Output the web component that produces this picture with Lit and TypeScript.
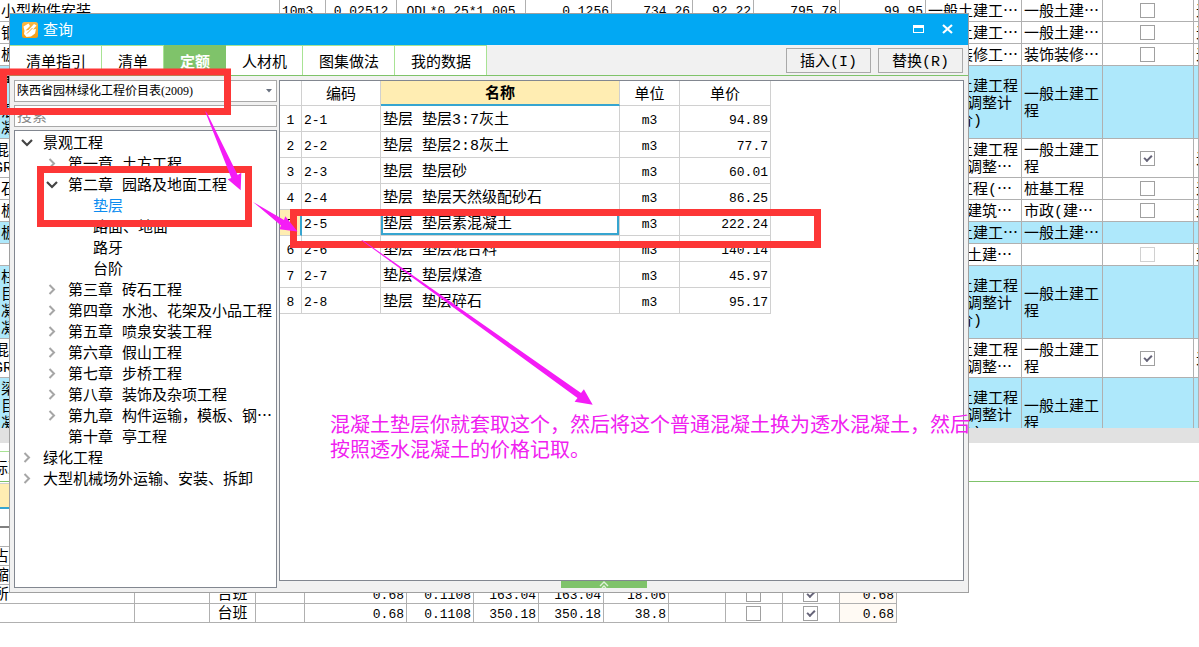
import { LitElement, html, css, svg, nothing } from "lit";
import { customElement, state } from "lit/decorators.js";
import { classMap } from "lit/directives/class-map.js";

type Check = "on" | "off" | "dim" | "";

interface SheetRow {
  size: "short" | "medium" | "tall";
  blue?: boolean;
  name: string;
  cut?: boolean;
  nums?: string[];
  major: string;
  minor: string;
  check: Check;
  last: string;
}

const SHEET: SheetRow[] = [
  { size: "short", name: "小型构件安装", nums: ["10m3", "0.02512", "QDL*0.25*1.005", "0.1256", "734.26", "92.22", "795.78", "99.95"], major: "一般土建工…", minor: "一般土建…", check: "off", last: "无" },
  { size: "short", name: "钢", major: "一般土建工…", minor: "一般土建…", check: "off", last: "无" },
  { size: "short", name: "板", major: "装饰装修工…", minor: "装饰装修…", check: "off", last: "无" },
  { size: "tall", blue: true, name: "量\n\n混\n凝", major: "一般土建工程\n(人工调整计\n人工价)", minor: "一般土建工程", check: "", last: "" },
  { size: "medium", name: "混\nGR", cut: true, major: "一般土建工程\n(人工调整…", minor: "一般土建工程", check: "on", last: "无" },
  { size: "short", name: "石", major: "桩基工程(…", minor: "桩基工程", check: "off", last: "无" },
  { size: "short", name: "板", major: "市政(建筑…", minor: "市政(建…", check: "off", last: "无" },
  { size: "short", blue: true, name: "板", major: "一般土建工…", minor: "一般土建…", check: "", last: "" },
  { size: "short", name: "", major: "一般(土建…", minor: "", check: "dim", last: "无" },
  { size: "tall", blue: true, name: "柱\n目\n凝\n凝", major: "一般土建工程\n(人工调整计\n人工价)", minor: "一般土建工程", check: "", last: "" },
  { size: "medium", name: "混\nGR", cut: true, major: "一般土建工程\n(人工调整…", minor: "一般土建工程", check: "on", last: "无" },
  { size: "tall", blue: true, name: "梁\n目\n凝\n凝", major: "一般土建工程\n(人工调整计\n人工价)", minor: "一般土建工程", check: "", last: "" },
];

interface TreeNode {
  level: 0 | 1 | 2;
  text: string;
  mark?: "open" | "closed";
}

const TREE: TreeNode[] = [
  { level: 0, text: "景观工程", mark: "open" },
  { level: 1, text: "第一章 土方工程", mark: "closed" },
  { level: 1, text: "第二章 园路及地面工程", mark: "open" },
  { level: 2, text: "垫层" },
  { level: 2, text: "路面、地面" },
  { level: 2, text: "路牙" },
  { level: 2, text: "台阶" },
  { level: 1, text: "第三章 砖石工程", mark: "closed" },
  { level: 1, text: "第四章 水池、花架及小品工程", mark: "closed" },
  { level: 1, text: "第五章 喷泉安装工程", mark: "closed" },
  { level: 1, text: "第六章 假山工程", mark: "closed" },
  { level: 1, text: "第七章 步桥工程", mark: "closed" },
  { level: 1, text: "第八章 装饰及杂项工程", mark: "closed" },
  { level: 1, text: "第九章 构件运输，模板、钢…", mark: "closed" },
  { level: 1, text: "第十章 亭工程" },
  { level: 0, text: "绿化工程", mark: "closed" },
  { level: 0, text: "大型机械场外运输、安装、拆卸", mark: "closed" },
];

const QUOTA = [
  ["2-1", "垫层 垫层3:7灰土", "m3", "94.89"],
  ["2-2", "垫层 垫层2:8灰土", "m3", "77.7"],
  ["2-3", "垫层 垫层砂", "m3", "60.01"],
  ["2-4", "垫层 垫层天然级配砂石", "m3", "86.25"],
  ["2-5", "垫层 垫层素混凝土", "m3", "222.24"],
  ["2-6", "垫层 垫层混合料", "m3", "140.14"],
  ["2-7", "垫层 垫层煤渣", "m3", "45.97"],
  ["2-8", "垫层 垫层碎石", "m3", "95.17"],
];

const TABS = ["清单指引", "清单", "定额", "人材机", "图集做法", "我的数据"];

const FONT = css`
  :host {
    font-family: "Liberation Mono", "Noto Sans CJK SC", monospace;
    font-size: 15px;
    line-height: 17px;
    color: #000;
  }
  * {
    box-sizing: border-box;
  }
  table {
    border-collapse: separate;
    border-spacing: 0;
    table-layout: fixed;
  }
  td,
  th {
    padding: 4px 2px 0;
    overflow: hidden;
    white-space: nowrap;
    font-weight: 400;
    text-align: left;
  }
  .dots {
    font-family: "Noto Sans CJK SC", sans-serif;
    line-height: 0;
  }
  .num {
    font-size: 13px;
    text-align: right;
  }
  .mid {
    text-align: center;
  }
  .start {
    text-align: left;
  }
`;

const CHECKBOX = css`
  input[type="checkbox"] {
    appearance: none;
    display: block;
    position: relative;
    width: 15px;
    height: 15px;
    margin: 0 auto;
    border: 1px solid #a0a0a0;
    background: #fff;
  }
  input[type="checkbox"]:disabled {
    border-color: #d0d0d0;
  }
  input[type="checkbox"]:checked::after {
    content: "";
    box-sizing: border-box;
    position: absolute;
    left: 3px;
    top: 3px;
    width: 8px;
    height: 5px;
    border: solid #666478;
    border-width: 0 0 2px 2px;
    transform: rotate(-45deg);
  }
`;

/** Keeps the ellipsis full-width and vertically centred. */
const withDots = (text: string) => {
  const at = text.indexOf("…");
  return at < 0 ? text : html`${text.slice(0, at)}<span class="dots">…</span>`;
};

@customElement("budget-sheet")
class BudgetSheet extends LitElement {
  static styles = [
    FONT,
    CHECKBOX,
    css`
      :host {
        display: block;
        background: #fff;
      }
      .upper {
        height: 428px;
        overflow: hidden;
      }
      .upper table {
        width: 100%;
      }
      .upper td {
        border-right: 1px solid #b0b0b0;
        border-bottom: 1px solid #b0b0b0;
      }
      .short { height: 22px; }
      .medium { height: 39px; }
      .tall { height: 73px; }
      .blue { background: #aee8fb; }
      .lines { white-space: pre; }
      .wrap { white-space: normal; }
      .short .wrap { white-space: nowrap; }
      .upper .num { padding-top: 2px; }
      td.tick { padding: 0 3px 0 2px; }
      .c-name { width: 280px; }
      .c46 { width: 46px; }
      .c71 { width: 71px; }
      .c129 { width: 129px; }
      .c86 { width: 86px; }
      .c81 { width: 81px; }
      .c61 { width: 61px; }
      .c96 { width: 96px; }
      .c91 { width: 91px; }
      td.c-name-cell { padding-left: 1px; }
      td.cut { padding-left: 0; }
      .cut span { display: block; margin-left: -6px; }
      td.last { padding-right: 0; }
      .scroll {
        height: 15px;
        background: #e1e1e1;
      }
      .strip {
        display: flex;
        align-items: flex-end;
        height: 39px;
        border-bottom: 1px solid #7fc36a;
      }
      .strip span {
        height: 30px;
        width: 86px;
        padding-top: 9px;
        border-top: 1px solid #a8e394;
        text-indent: -7px;
        overflow: hidden;
      }
      .lower {
        width: 897px;
        margin-top: 1px;
        border-top: 1px solid #d0d0d0;
        line-height: 14px;
      }
      .lower th {
        height: 25px;
        padding: 0;
        background: #ffedb2;
        border-bottom: 2px solid #36a5d0;
      }
      .lower td {
        height: 19px;
        border-right: 1px solid #b0b0b0;
        border-bottom: 1px solid #b0b0b0;
      }
      .lower .total td {
        border-bottom: 2px solid #808080;
      }
      .lower td:last-child { background: #fffaf4; }
      .lower td:first-child { padding-left: 0; text-indent: -6px; }
      .w135 { width: 135px; }
      .w75 { width: 75px; }
      .w46 { width: 46px; }
      .w49 { width: 49px; }
      .w102 { width: 102px; }
      .w67 { width: 67px; }
      .w65 { width: 65px; }
      .w57 { width: 57px; }
    `,
  ];

  private box(check: Check, label: string) {
    return check
      ? html`<input type="checkbox" aria-label=${label} ?checked=${check === "on"} ?disabled=${check === "dim"} />`
      : nothing;
  }

  private lowerRow(name: string, vals: string[] | null, total = false) {
    return html`<tr class=${total ? "total" : ""}>
      <td>${name}</td>
      <td></td>
      <td class="mid">${vals ? "台班" : ""}</td>
      <td></td>
      ${[0, 1, 2, 3, 4].map((i) => html`<td class="num">${vals ? vals[i] : ""}</td>`)}
      <td></td>
      <td class="tick">${vals ? this.box("off", "暂估") : ""}</td>
      <td class="tick">${vals ? this.box("on", "计价") : ""}</td>
      <td class="num">${vals ? vals[0] : ""}</td>
    </tr>`;
  }

  render() {
    const upperCols = ["c-name", "c46", "c71", "c129", "c86", "c81", "c61", "c86", "c86", "c96", "c81", "c91", ""];
    const lowerCols = ["w135", "w75", "w46", "w49", "w102", "w67", "w65", "w65", "w65", "w57", "w57", "w57", "w57"];
    return html`
      <div class="upper">
        <table>
          <colgroup>${upperCols.map((c) => html`<col class=${c} />`)}</colgroup>
          <tbody>
            ${SHEET.map(
              (r) => html`<tr class=${classMap({ [r.size]: true, blue: !!r.blue })}>
                <td class=${classMap({ "c-name-cell": true, lines: true, cut: !!r.cut })}>${r.cut ? html`<span>${r.name}</span>` : r.name}</td>
                ${[0, 1, 2, 3, 4, 5, 6, 7].map((i) => html`<td class=${classMap({ num: true, start: i === 0, mid: i === 1 || i === 2 })}>${r.nums?.[i] ?? ""}</td>`)}
                <td class="lines">${withDots(r.major)}</td>
                <td class="wrap">${withDots(r.minor)}</td>
                <td class="tick">${this.box(r.check, "汇总")}</td>
                <td class="last">${r.last}</td>
              </tr>`
            )}
          </tbody>
        </table>
      </div>
      <div class="scroll"></div>
      <div class="strip"><span>标准换算</span></div>
      <table class="lower">
        <colgroup>${lowerCols.map((c) => html`<col class=${c} />`)}</colgroup>
        <tbody>
          <tr>${lowerCols.map(() => html`<th></th>`)}</tr>
          ${this.lowerRow("", null, true)}
          ${this.lowerRow("", null)}
          ${this.lowerRow("占", null)}
          ${this.lowerRow("缩机", null)}
          ${this.lowerRow("所", ["0.68", "0.1108", "163.04", "163.04", "18.06"])}
          ${this.lowerRow("", ["0.68", "0.1108", "350.18", "350.18", "38.8"])}
        </tbody>
      </table>
    `;
  }
}

@customElement("chapter-tree")
class ChapterTree extends LitElement {
  static styles = [
    FONT,
    css`
      :host {
        display: block;
        overflow: hidden;
        background: #fff;
        border: 1px solid #828790;
        padding-top: 3px;
      }
      ul {
        margin: 0;
        padding: 0;
        list-style: none;
      }
      li {
        display: flex;
        align-items: center;
        height: 21px;
        white-space: nowrap;
      }
      .l0 { padding-left: 4px; }
      .l1 { padding-left: 29px; }
      .l2 { padding-left: 54px; }
      svg,
      .blank {
        flex: none;
        width: 16px;
        height: 16px;
        margin-right: 8px;
      }
      .picked { color: #0c8cf0; }
    `,
  ];

  render() {
    return html`<ul role="tree">
      ${TREE.map(
        (n) => html`<li role="treeitem" class=${classMap({ [`l${n.level}`]: true, picked: n.text === "垫层" })}>
          ${n.mark === "open"
            ? html`<svg viewBox="0 0 16 16"><path d="M3 3l5 5 5-5" fill="none" stroke="#444" stroke-width="2.2" /></svg>`
            : n.mark === "closed"
              ? html`<svg viewBox="0 0 16 16"><path d="M5.500 1l4.500 4.500-4.500 4.500" fill="none" stroke="#a6a6a6" stroke-width="2" /></svg>`
              : html`<span class="blank"></span>`}
          <span>${withDots(n.text)}</span>
        </li>`
      )}
    </ul>`;
  }
}

@customElement("quota-grid")
class QuotaGrid extends LitElement {
  static styles = [
    FONT,
    css`
      :host {
        display: block;
        background: #fff;
        border: 1px solid #828790;
        overflow: hidden;
      }
      table { width: 491px; }
      td,
      th {
        height: 26px;
        border-right: 1px solid #d0d0d0;
        border-bottom: 1px solid #d0d0d0;
      }
      th {
        height: 25px;
        text-align: center;
      }
      .main {
        font-weight: 700;
        background: #ffedb2;
        border-bottom: 2px solid #36a5d0;
      }
      .n { width: 22px; padding-left: 0; padding-right: 0; text-align: center; }
      .code { width: 79px; text-align: left; }
      .name { width: 239px; }
      .unit { width: 60px; text-align: center; }
      .price { width: 91px; }
      th.code { text-align: center; }
      .now .n {
        background: #ffedb2;
        border-right: 2px solid #36a5d0;
      }
      .now .name { box-shadow: inset 0 0 0 2px #36a5d0; }
    `,
  ];

  render() {
    return html`<table>
      <thead>
        <tr>
          <th class="n"></th>
          <th class="code">编码</th>
          <th class="name main">名称</th>
          <th class="unit">单位</th>
          <th class="price">单价</th>
        </tr>
      </thead>
      <tbody>
        ${QUOTA.map(
          ([code, name, unit, price], i) => html`<tr class=${code === "2-5" ? "now" : ""}>
            <td class="num n">${i + 1}</td>
            <td class="num code">${code}</td>
            <td class="name">${name}</td>
            <td class="num unit">${unit}</td>
            <td class="num price">${price}</td>
          </tr>`
        )}
      </tbody>
    </table>`;
  }
}

@customElement("query-dialog")
class QueryDialog extends LitElement {
  static styles = [
    FONT,
    css`
      :host {
        display: flex;
        flex-direction: column;
        border: 1px solid #a0a0a0;
        background: #f1f1f1;
      }
      header {
        display: flex;
        align-items: center;
        flex: none;
        height: 31px;
        padding: 0 12px;
        background: #02a8f3;
        color: #fff;
      }
      header h1 {
        flex: 1;
        margin: 4px 0 0 5px;
        font-size: 15px;
        font-weight: 400;
      }
      header button {
        width: 16px;
        height: 16px;
        margin-left: 13px;
        padding: 0;
        border: 0;
        background: none;
      }
      svg { display: block; }
      nav {
        display: flex;
        flex: none;
        height: 31px;
        border-bottom: 1px solid #7fc36a;
      }
      .tab {
        height: 30px;
        padding: 5px 15px 0 16px;
        border: solid #a8e394;
        border-width: 1px 1px 0 0;
        background: #fff;
        font: inherit;
        color: inherit;
        white-space: nowrap;
      }
      .tab.active {
        background: #7fc36a;
        border-color: #7fc36a;
        color: #fff;
        font-weight: 700;
      }
      .actions {
        display: flex;
        gap: 7px;
        margin-left: auto;
        padding: 3px 5px 0 0;
      }
      .actions button {
        width: 85px;
        height: 25px;
        padding: 3px 0 0;
        border: 1px solid #a9a9a9;
        background: #f1f1f1;
        font: inherit;
        color: inherit;
      }
      main {
        flex: 1;
        min-height: 0;
        display: flex;
        gap: 2px;
        padding: 4px;
      }
      .side {
        flex: none;
        width: 263px;
        display: flex;
        flex-direction: column;
        gap: 3px;
      }
      .combo {
        display: grid;
        align-items: center;
      }
      .combo > * { grid-area: 1 / 1; }
      .combo svg {
        justify-self: end;
        margin-right: 5px;
        pointer-events: none;
      }
      select,
      input {
        appearance: none;
        width: 100%;
        height: 22px;
        margin: 0;
        padding: 0 2px;
        border: 1px solid #a9a9a9;
        border-radius: 0;
        background: #fff;
        color: #000;
        font-family: inherit;
      }
      select { font: 12px "Liberation Serif", "Noto Sans CJK SC", serif; }
      input { padding-top: 3px; font-size: 15px; }
      input::placeholder { color: #888; }
      chapter-tree {
        flex: 1;
      }
      .content {
        flex: 1;
        min-width: 0;
        display: flex;
        flex-direction: column;
        align-items: center;
      }
      quota-grid {
        flex: 1;
        align-self: stretch;
      }
      .handle {
        width: 86px;
        height: 7px;
        margin-right: 36px;
        padding: 0;
        border: 0;
        background: #7fc36a;
      }
      .handle svg { margin: 0 auto; }
    `,
  ];

  @state() private active = "定额";

  render() {
    return html`
      <header>
        <svg width="16" height="16" viewBox="0 0 16 16">
          <defs>
            <linearGradient id="amber" x1="0" y1="0" x2="0" y2="1">
              <stop offset="0" stop-color="#f9b945" />
              <stop offset="1" stop-color="#f49b14" />
            </linearGradient>
          </defs>
          <rect width="16" height="16" rx="2.5" fill="url(#amber)" />
          <path d="M1.500 4.500l5-3 1.500 2.500-4.500 4.500 3-.5 5.500-6 2.500 1.500-3.500 4 3-.5-1 4.500-4 3-4.500.5L2 12l.5-3z" fill="#fff" />
          <path d="M5 11.500l5.500-5.500" stroke="#f5a62c" stroke-width="1" fill="none" />
        </svg>
        <h1>查询</h1>
        <button aria-label="最大化"><svg width="16" height="16" viewBox="0 0 16 16"><path d="M2 3h11v8H2zM3 6v4h9V6z" fill="#fff" fill-rule="evenodd" /></svg></button>
        <button aria-label="关闭"><svg width="16" height="16" viewBox="0 0 16 16"><path d="M3 3l9 8M12 3l-9 8" stroke="#fff" stroke-width="2.2" /></svg></button>
      </header>
      <nav>
        ${TABS.map(
          (t) => html`<button class=${classMap({ tab: true, active: t === this.active })} @click=${() => (this.active = t)}>${t}</button>`
        )}
        <div class="actions">
          <button>插入(I)</button>
          <button>替换(R)</button>
        </div>
      </nav>
      <main>
        <div class="side">
          <div class="combo">
            <select aria-label="定额库"><option>陕西省园林绿化工程价目表(2009)</option></select>
            <svg width="6" height="4" viewBox="0 0 6 4"><path d="M0 0h6L3 3.500z" fill="#6a7280" /></svg>
          </div>
          <input type="text" placeholder="搜索" aria-label="搜索" />
          <chapter-tree></chapter-tree>
        </div>
        <div class="content">
          <quota-grid></quota-grid>
          <button class="handle" aria-label="展开">
            <svg width="10" height="7" viewBox="0 0 10 7"><path d="M1 5l4-4 4 4M3 7l2-2 2 2" fill="none" stroke="#dff2d8" stroke-width="1.400" /></svg>
          </button>
        </div>
      </main>
    `;
  }
}

@customElement("app-root")
class AppRoot extends LitElement {
  static styles = [
    FONT,
    css`
      :host {
        display: block;
        position: relative;
        height: 100vh;
        overflow: hidden;
        background: #fff;
      }
      query-dialog {
        position: absolute;
        left: 9px;
        right: 230px;
        top: 13px;
        height: 580px;
      }
      .marks {
        position: absolute;
        left: 0;
        top: 0;
        pointer-events: none;
      }
      .note {
        position: absolute;
        left: 330px;
        top: 411px;
        margin: 0;
        font-family: "Noto Sans CJK SC", sans-serif;
        font-size: 20px;
        line-height: 25px;
        color: #f020f0;
        white-space: nowrap;
      }
    `,
  ];

  render() {
    return html`
      <budget-sheet></budget-sheet>
      <query-dialog role="dialog" aria-label="查询"></query-dialog>
      <svg class="marks" width="830" height="420" viewBox="0 0 830 420">
        ${svg`
          <g fill="none" stroke="#fd3636" stroke-width="7">
            <rect x="3.500" y="72" width="224" height="39.500" />
            <rect x="40.500" y="169.500" width="208" height="54" />
            <rect x="293.500" y="212.500" width="524" height="32" />
          </g>
          <g fill="#f41cf6">
            <path d="M205 111L207 113 237.700 175 241.300 172.700 240.700 190.300 227.700 179.300 231.300 178z" />
            <path d="M253 202L284 220 285.300 216.300 297.500 231.500 279.300 229.300 281 225.500z" />
            <path d="M361 240L363 240.500 581 393 583.900 389.300 592.700 404.700 574.600 401.700 577.500 398z" />
          </g>
        `}
      </svg>
      <p class="note">混凝土垫层你就套取这个，然后将这个普通混凝土换为透水混凝土，然后<br />按照透水混凝土的价格记取。</p>
    `;
  }
}
